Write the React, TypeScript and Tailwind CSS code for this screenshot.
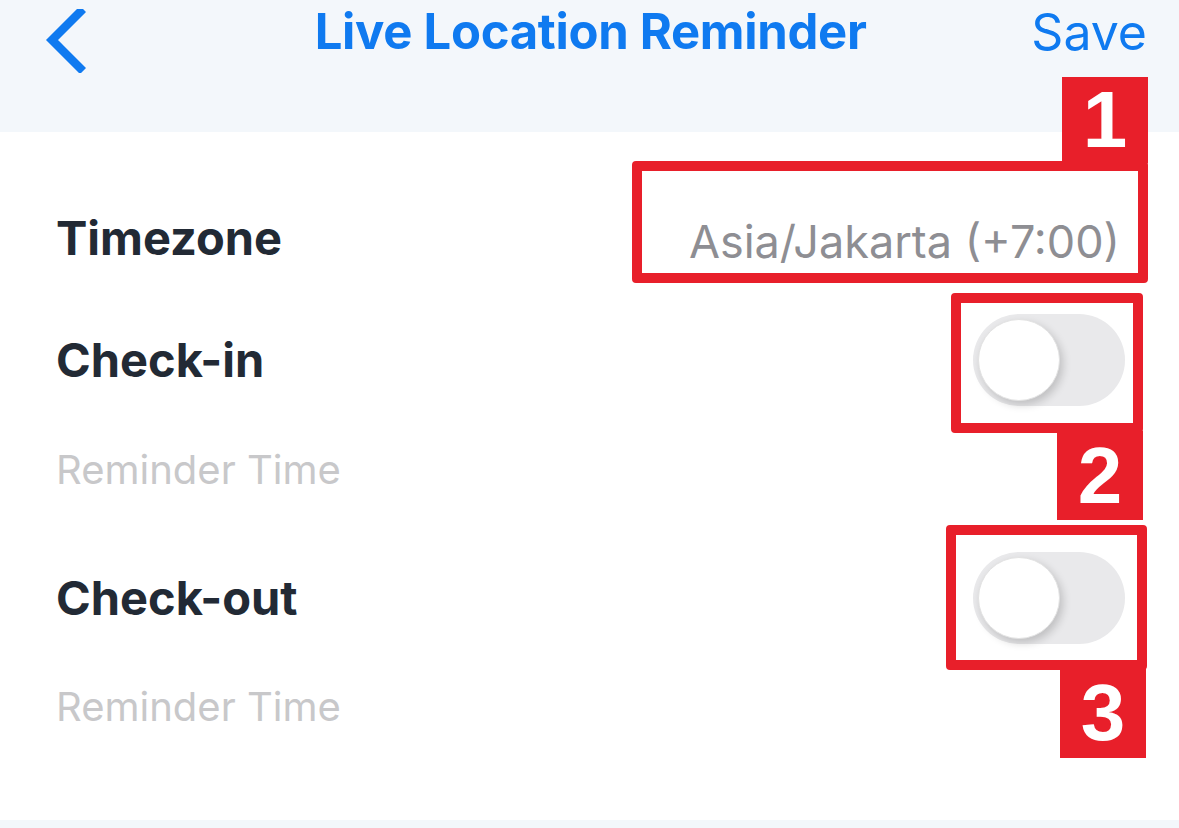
export default function App() {
  return (
    <div className="relative h-[828px] w-[1179px] overflow-hidden bg-white font-['Inter',sans-serif]">
      {/* Header */}
      <div className="flex h-[132px] items-start bg-[#f3f7fb]">
        <div className="flex h-[64px] w-full items-center justify-between pl-[44px] pr-[32px]">
          <svg width="42" height="64" viewBox="0 0 42 64" className="mt-[18px] shrink-0">
            <path d="M36 3 L8 31 L36 59" fill="none" stroke="#0f7af0" strokeWidth="8.5" strokeLinecap="square" />
          </svg>
          <div className="pl-[64px] text-[49px] font-bold tracking-[-0.3px] text-[#0f7af0]">Live Location Reminder</div>
          <div className="text-[50px] font-normal text-[#0f7af0]">Save</div>
        </div>
      </div>

      {/* Content */}
      <div className="flex flex-col pl-[56px] pt-[46px]">
        <div className="flex h-[120px] items-center justify-between pr-[59px]">
          <span className="text-[47px] font-bold text-[#222a35]">Timezone</span>
          <span className="pt-[8px] text-[45px] font-normal text-[#8e8e93]">Asia/Jakarta (+7:00)</span>
        </div>
        <div className="flex h-[124px] items-center justify-between pr-[54px]">
          <span className="text-[47px] font-bold text-[#222a35]">Check-in</span>
          <Toggle />
        </div>
        <div className="flex h-[96px] items-center">
          <span className="text-[40px] font-normal text-[#c8c8ca]">Reminder Time</span>
        </div>
        <div className="flex h-[160px] items-center justify-between pr-[54px]">
          <span className="text-[47px] font-bold text-[#222a35]">Check-out</span>
          <Toggle />
        </div>
        <div className="flex h-[58px] items-center">
          <span className="text-[40px] font-normal text-[#c8c8ca]">Reminder Time</span>
        </div>
      </div>
      <div className="absolute bottom-0 left-0 h-[8px] w-full bg-[#f3f7fb]" />

      {/* Annotations */}
      <div className="absolute left-[632px] top-[161px] h-[122px] w-[516px] rounded-[4px] border-[10px] border-[#e81f2a]" />
      <Tab n="1" className="left-[1062px] top-[77px] h-[86px]" />

      <div className="absolute left-[951px] top-[293px] h-[140px] w-[192px] rounded-[4px] border-[10px] border-[#e81f2a]" />
      <Tab n="2" className="left-[1057px] top-[431px] h-[89px]" />

      <div className="absolute left-[946px] top-[525px] h-[145px] w-[201px] rounded-[4px] border-[10px] border-[#e81f2a]" />
      <Tab n="3" className="left-[1060px] top-[668px] h-[90px]" />
    </div>
  );
}

function Toggle() {
  return (
    <div className="flex h-[92px] w-[152px] items-center rounded-full bg-[#e9e9eb] px-[5px]">
      <div className="h-[82px] w-[82px] rounded-full border border-[#e2e2e2] bg-white shadow-[3px_4px_8px_rgba(0,0,0,0.18)]" />
    </div>
  );
}

function Tab({ n, className }: { n: string; className: string }) {
  return (
    <div
      className={`absolute flex w-[86px] items-center justify-center bg-[#e81f2a] font-['Liberation_Sans',Arial,sans-serif] text-[80px] font-bold leading-none text-white ${className}`}
    >
      {n}
    </div>
  );
}
